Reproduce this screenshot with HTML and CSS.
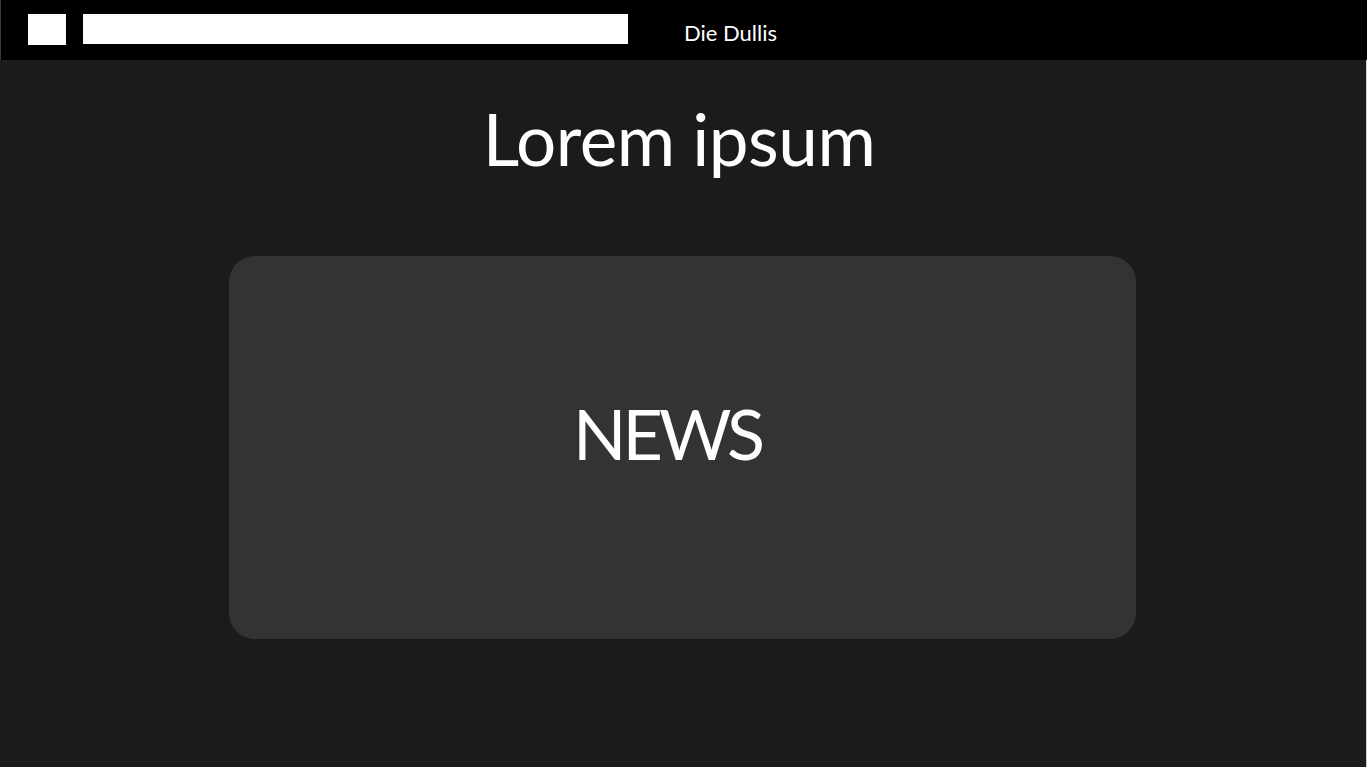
FILE: index.html
```html
<!DOCTYPE html>
<html lang="de">
<head>
<meta charset="utf-8">
<title>Die Dullis</title>
<link rel="stylesheet" href="styles.css">
</head>
<body>
<header class="topbar">
  <div class="logo-box"></div>
  <div class="search-box"></div>
  <span class="brand">Die Dullis</span>
</header>
<main class="main">
  <h1 class="title">Lorem ipsum</h1>
  <section class="news-card">
    <h2 class="news-label">NEWS</h2>
  </section>
</main>
</body>
</html>
```
FILE: styles.css
```css
html, body {
  margin: 0;
  padding: 0;
}
body {
  background: #1b1b1b;
  font-family: "Lato", "Liberation Sans", sans-serif;
  color: #ffffff;
  width: 1367px;
  height: 767px;
  overflow: hidden;
}
.topbar {
  height: 60px;
  background: #000000;
  display: flex;
  align-items: flex-start;
  padding-left: 28px;
  box-sizing: border-box;
  border-left: 1px solid #3a3a3a;
}
.logo-box {
  width: 38px;
  height: 31px;
  margin-top: 14px;
  margin-left: -1px;
  background: #ffffff;
}
.search-box {
  width: 545px;
  height: 30px;
  margin-top: 14px;
  margin-left: 17px;
  background: #ffffff;
}
.brand {
  margin-left: 56px;
  margin-top: 22px;
  font-size: 22px;
  line-height: 1;
}
.main {
  display: flex;
  flex-direction: column;
  align-items: center;
  height: 707px;
  border-right: 1px solid #cfcfcf;
  box-sizing: border-box;
}
.title {
  margin: 43px 8px 0 0;
  font-size: 71px;
  font-weight: 400;
  line-height: 1;
  letter-spacing: -0.5px;
}
.news-card {
  margin-top: 82px;
  margin-left: -2px;
  width: 907px;
  height: 383px;
  background: #333333;
  border-radius: 26px;
  display: flex;
  align-items: center;
  justify-content: center;
  padding: 0 30px 30px 0;
  box-sizing: border-box;
}
.news-label {
  margin: 0;
  font-size: 70px;
  font-weight: 400;
  line-height: 1;
  letter-spacing: -4px;
}
```
